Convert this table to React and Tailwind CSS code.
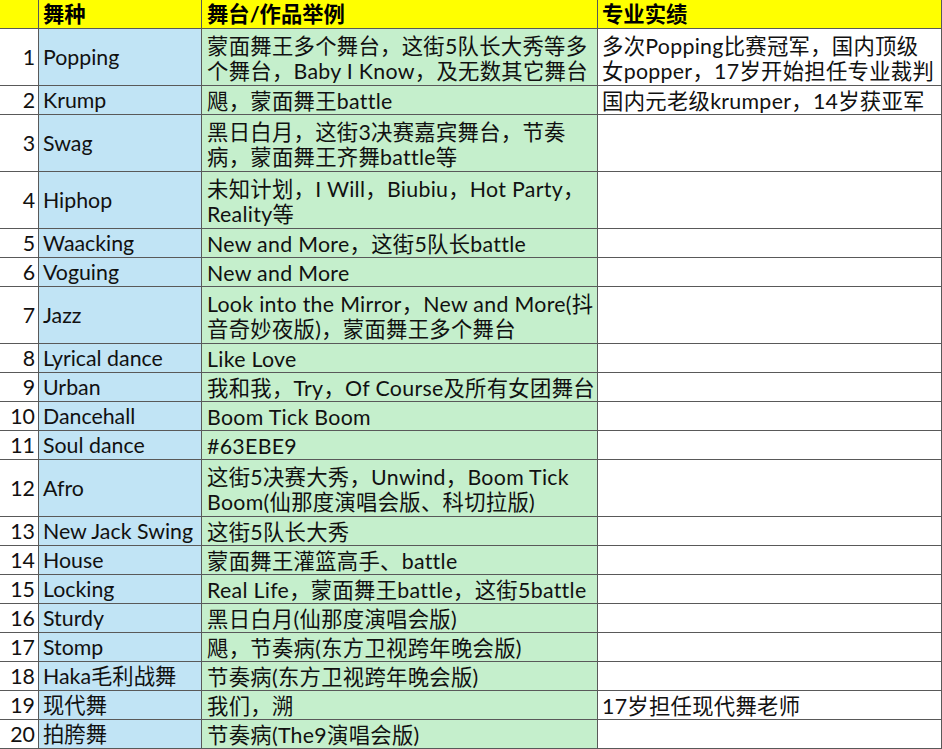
const ROWS = [
  { h: 'h-[57px]', name: 'Popping', works: ['蒙面舞王多个舞台，这街5队长大秀等多', '个舞台，Baby I Know，及无数其它舞台'], record: ['多次Popping比赛冠军，国内顶级', '女popper，17岁开始担任专业裁判'] },
  { h: 'h-[29px]', name: 'Krump', works: ['飓，蒙面舞王battle'], record: ['国内元老级krumper，14岁获亚军'] },
  { h: 'h-[57px]', name: 'Swag', works: ['黑日白月，这街3决赛嘉宾舞台，节奏', '病，蒙面舞王齐舞battle等'], record: [] },
  { h: 'h-[57px]', name: 'Hiphop', works: ['未知计划，I Will，Biubiu，Hot Party，', 'Reality等'], record: [] },
  { h: 'h-[29px]', name: 'Waacking', works: ['New and More，这街5队长battle'], record: [] },
  { h: 'h-[29px]', name: 'Voguing', works: ['New and More'], record: [] },
  { h: 'h-[57px]', name: 'Jazz', works: ['Look into the Mirror，New and More(抖', '音奇妙夜版)，蒙面舞王多个舞台'], record: [] },
  { h: 'h-[29px]', name: 'Lyrical dance', works: ['Like Love'], record: [] },
  { h: 'h-[29px]', name: 'Urban', works: ['我和我，Try，Of Course及所有女团舞台'], record: [] },
  { h: 'h-[29px]', name: 'Dancehall', works: ['Boom Tick Boom'], record: [] },
  { h: 'h-[29px]', name: 'Soul dance', works: ['#63EBE9'], record: [] },
  { h: 'h-[57px]', name: 'Afro', works: ['这街5决赛大秀，Unwind，Boom Tick', 'Boom(仙那度演唱会版、科切拉版)'], record: [] },
  { h: 'h-[29px]', name: 'New Jack Swing', works: ['这街5队长大秀'], record: [] },
  { h: 'h-[29px]', name: 'House', works: ['蒙面舞王灌篮高手、battle'], record: [] },
  { h: 'h-[29px]', name: 'Locking', works: ['Real Life，蒙面舞王battle，这街5battle'], record: [] },
  { h: 'h-[29px]', name: 'Sturdy', works: ['黑日白月(仙那度演唱会版)'], record: [] },
  { h: 'h-[29px]', name: 'Stomp', works: ['飓，节奏病(东方卫视跨年晚会版)'], record: [] },
  { h: 'h-[29px]', name: 'Haka毛利战舞', works: ['节奏病(东方卫视跨年晚会版)'], record: [] },
  { h: 'h-[29px]', name: '现代舞', works: ['我们，溯'], record: ['17岁担任现代舞老师'] },
  { h: 'h-[29px]', name: '拍胯舞', works: ['节奏病(The9演唱会版)'], record: [] },
]

function Lines({ lines }) {
  return lines.map((l, i) => (
    <div key={i} className="whitespace-nowrap">{l}</div>
  ))
}

export default function App() {
  return (
    <div
      className="w-[942px] h-[749px] overflow-hidden bg-white text-[#111] text-[21.33px] leading-[25px]"
      style={{ fontFamily: 'Lato, "Noto Sans CJK SC", sans-serif' }}
    >
      {/* header */}
      <div className="flex h-[29px] bg-[#ffff00] border-b border-[#595959] font-bold text-black">
        <div className="w-[39px] border-r border-[#595959]" />
        <div className="w-[163px] border-r border-[#595959] pl-1 flex items-center">舞种</div>
        <div className="w-[396px] border-r border-[#595959] pl-[5px] flex items-center">舞台/作品举例</div>
        <div className="w-[344px] border-r border-[#595959] pl-[4px] flex items-center">专业实绩</div>
      </div>

      {ROWS.map((r, i) => (
        <div key={i} className={`flex ${r.h} border-b border-[#595959]`}>
          <div className="w-[39px] border-r border-[#595959] pr-[3px] pt-[1px] flex items-center justify-end">{i + 1}</div>
          <div className="w-[163px] border-r border-[#595959] bg-[#c1e4f5] pl-1 pt-[1px] flex items-center whitespace-nowrap">{r.name}</div>
          <div className="w-[396px] border-r border-[#595959] bg-[#c5efcc] pl-[5px] pt-[3px] tracking-[0.3px] flex flex-col justify-center">
            <Lines lines={r.works} />
          </div>
          <div className="w-[344px] border-r border-[#595959] pl-[4px] pt-[3px] tracking-[0.3px] flex flex-col justify-center">
            <Lines lines={r.record} />
          </div>
        </div>
      ))}
    </div>
  )
}
